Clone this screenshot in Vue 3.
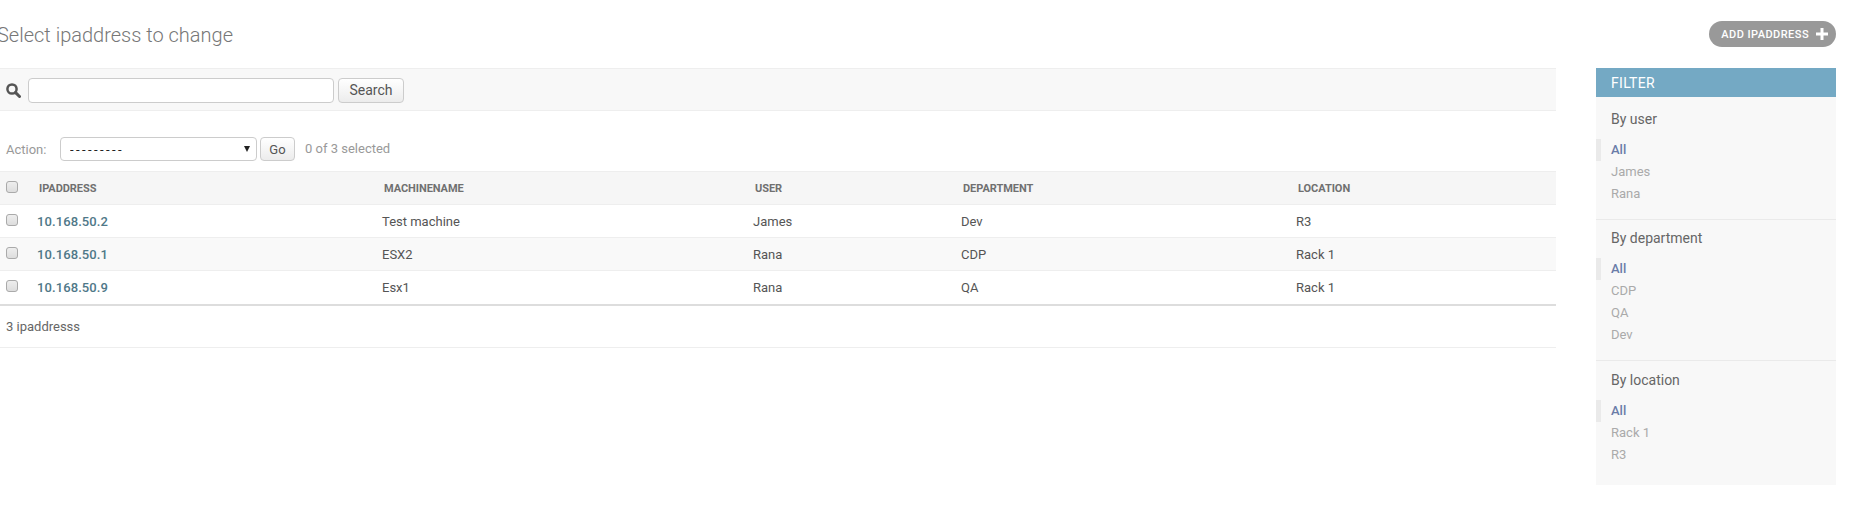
<script setup>
const rows = [
  { ip: '10.168.50.2', name: 'Test machine', user: 'James', dept: 'Dev', loc: 'R3' },
  { ip: '10.168.50.1', name: 'ESX2', user: 'Rana', dept: 'CDP', loc: 'Rack 1' },
  { ip: '10.168.50.9', name: 'Esx1', user: 'Rana', dept: 'QA', loc: 'Rack 1' }
]
const heads = ['Ipaddress', 'Machinename', 'User', 'Department', 'Location']
const filters = [
  { title: 'By user', items: ['All', 'James', 'Rana'] },
  { title: 'By department', items: ['All', 'CDP', 'QA', 'Dev'] },
  { title: 'By location', items: ['All', 'Rack 1', 'R3'] }
]
</script>

<template>
  <div class="page">
    <header class="top">
      <h1>Select ipaddress to change</h1>
      <a class="add" href="#">ADD IPADDRESS
        <svg width="12" height="12" viewBox="0 0 12 12"><path d="M4.5 0h3v4.5H12v3H7.5V12h-3V7.5H0v-3h4.5z" fill="#fff"/></svg>
      </a>
    </header>
    <div class="content">
      <main class="main">
        <div class="search">
          <svg class="mag" width="15" height="15" viewBox="0 0 15 15"><circle cx="6" cy="6" r="4.6" fill="none" stroke="#555" stroke-width="2.5"/><path d="M9.6 9.6l3.9 3.9" stroke="#555" stroke-width="3" stroke-linecap="round"/></svg>
          <input class="text" type="text" />
          <button class="btn search-btn" type="button">Search</button>
        </div>
        <div class="actions">
          <label>Action:</label>
          <span class="select-wrap">
            <select><option>---------</option></select>
          </span>
          <button class="btn go" type="button">Go</button>
          <span class="count">0 of 3 selected</span>
        </div>
        <table>
          <colgroup>
            <col style="width:31px" /><col style="width:345px" /><col style="width:371px" /><col style="width:208px" /><col style="width:335px" /><col />
          </colgroup>
          <thead>
            <tr>
              <th class="chk"><input type="checkbox" /></th>
              <th v-for="h in heads" :key="h">{{ h }}</th>
            </tr>
          </thead>
          <tbody>
            <tr v-for="r in rows" :key="r.ip">
              <td class="chk"><input type="checkbox" /></td>
              <td class="ip"><a href="#">{{ r.ip }}</a></td>
              <td>{{ r.name }}</td>
              <td>{{ r.user }}</td>
              <td>{{ r.dept }}</td>
              <td>{{ r.loc }}</td>
            </tr>
          </tbody>
        </table>
        <p class="paginator">3 ipaddresss</p>
      </main>
      <aside class="filter">
        <h2>FILTER</h2>
        <section v-for="f in filters" :key="f.title">
          <h3>{{ f.title }}</h3>
          <ul>
            <li v-for="(it, i) in f.items" :key="it" :class="{ selected: i === 0 }"><a href="#">{{ it }}</a></li>
          </ul>
        </section>
      </aside>
    </div>
  </div>
</template>

<style>
html, body { margin: 0; background: #fff; }
</style>

<style scoped>
.page {
  width: 1857px;
  font-family: Roboto, "Liberation Sans", sans-serif;
  font-size: 13px;
  color: #666;
  box-sizing: border-box;
  padding-right: 21px;
}
a { text-decoration: none; }
.top {
  display: flex;
  justify-content: space-between;
  align-items: flex-start;
  height: 68px;
  padding-top: 21px;
  box-sizing: border-box;
}
h1 {
  margin: 2px 0 0 -3px;
  font-size: 20px;
  line-height: 24px;
  font-weight: 300;
  color: #777;
}
.add {
  display: flex;
  align-items: center;
  gap: 7px;
  height: 26px;
  padding: 0 8px 0 12px;
  border-radius: 13px;
  background: #999;
  color: #fff;
  font-size: 11px;
  font-weight: 500;
  letter-spacing: 0.45px;
}
.content { display: flex; gap: 40px; align-items: flex-start; }
.main { width: 1556px; flex: none; }
.search {
  display: flex;
  align-items: center;
  height: 43px;
  box-sizing: border-box;
  padding: 1px 0 0 6px;
  background: #f8f8f8;
  border-top: 1px solid #eee;
  border-bottom: 1px solid #eee;
}
.mag { flex: none; margin-right: 7px; }
.text {
  width: 306px;
  height: 25px;
  box-sizing: border-box;
  border: 1px solid #ccc;
  border-radius: 4px;
  background: #fff;
  padding: 0 5px;
}
.btn {
  font-family: inherit;
  color: #555;
  border: 1px solid #ccc;
  border-radius: 4px;
  background: linear-gradient(#fff, #ececec);
  padding: 0;
  box-sizing: border-box;
}
.search-btn { width: 66px; height: 25px; margin-left: 4px; font-size: 14px; }
.actions {
  display: flex;
  align-items: center;
  height: 60px;
  box-sizing: border-box;
  padding: 26px 0 10px 6px;
  color: #999;
}
.actions label { width: 54px; flex: none; font-size: 13px; }
.select-wrap { position: relative; display: block; width: 197px; height: 24px; }
.select-wrap::after {
  content: "";
  position: absolute;
  right: 7px;
  top: 9px;
  border-left: 3px solid transparent;
  border-right: 3px solid transparent;
  border-top: 6px solid #222;
  pointer-events: none;
}
select {
  appearance: none;
  width: 100%;
  height: 100%;
  box-sizing: border-box;
  border: 1px solid #ccc;
  border-radius: 4px;
  background: #fff;
  padding: 0 9px;
  color: #222;
  font-family: Roboto, sans-serif;
  font-size: 13px;
  letter-spacing: 2.4px;
}
.go { width: 35px; height: 24px; margin-left: 3px; font-size: 13px; }
.count { margin-left: 10px; margin-top: -2px; font-size: 13px; }
table {
  width: 100%;
  table-layout: fixed;
  border-collapse: collapse;
  border-top: 1px solid #eee;
  border-bottom: 2px solid #ddd;
}
th {
  height: 32px;
  padding: 0 0 0 8px;
  background: #f6f6f6;
  text-align: left;
  text-transform: uppercase;
  font-size: 11px;
  font-weight: 700;
  letter-spacing: -0.05px;
  color: #707070;
}
td {
  height: 33px;
  padding: 0 0 0 6px;
  border-top: 1px solid #eee;
  color: #555;
  box-sizing: border-box;
}
tbody tr:nth-child(2) td { background: #f9f9f9; }
tbody tr:last-child td { height: 34px; }
th.chk, td.chk { padding: 0 0 0 6px; }
input[type="checkbox"] {
  appearance: none;
  display: block;
  width: 12px;
  height: 12px;
  margin: -3px 0 0;
  box-sizing: border-box;
  border: 1px solid #aaa;
  border-radius: 3px;
  background: linear-gradient(#eee, #ddd);
}
.ip a { color: #4f7888; font-size: 13px; font-weight: 500; letter-spacing: 0.1px; }
.paginator {
  margin: 0;
  height: 42px;
  line-height: 41px;
  padding-left: 6px;
  box-sizing: border-box;
  border-bottom: 1px solid #eee;
}
.filter {
  width: 240px;
  flex: none;
  background: #f8f8f8;
  height: 417px;
}
.filter h2 {
  margin: 0;
  height: 29px;
  line-height: 30px;
  padding-left: 15px;
  background: #74a9c4;
  color: #fff;
  font-size: 14px;
  font-weight: 400;
  letter-spacing: 0.3px;
}
section { border-bottom: 1px solid #eaeaea; padding: 9px 0 14px; }
section:first-of-type { padding-top: 13px; }
section:last-of-type { border-bottom: 0; padding-top: 10px; }
h3 {
  margin: 0;
  padding-left: 15px;
  font-size: 14px;
  line-height: 18px;
  font-weight: 400;
  color: #666;
}
ul { list-style: none; margin: 11px 0 0; padding: 0; }
li { height: 22px; line-height: 22px; padding-left: 15px; font-size: 13px; }
li a { color: #aaa; }
li.selected { border-left: 5px solid #eaeaea; padding-left: 10px; }
li.selected a { color: #6a7ca8; font-weight: 500; }
</style>
